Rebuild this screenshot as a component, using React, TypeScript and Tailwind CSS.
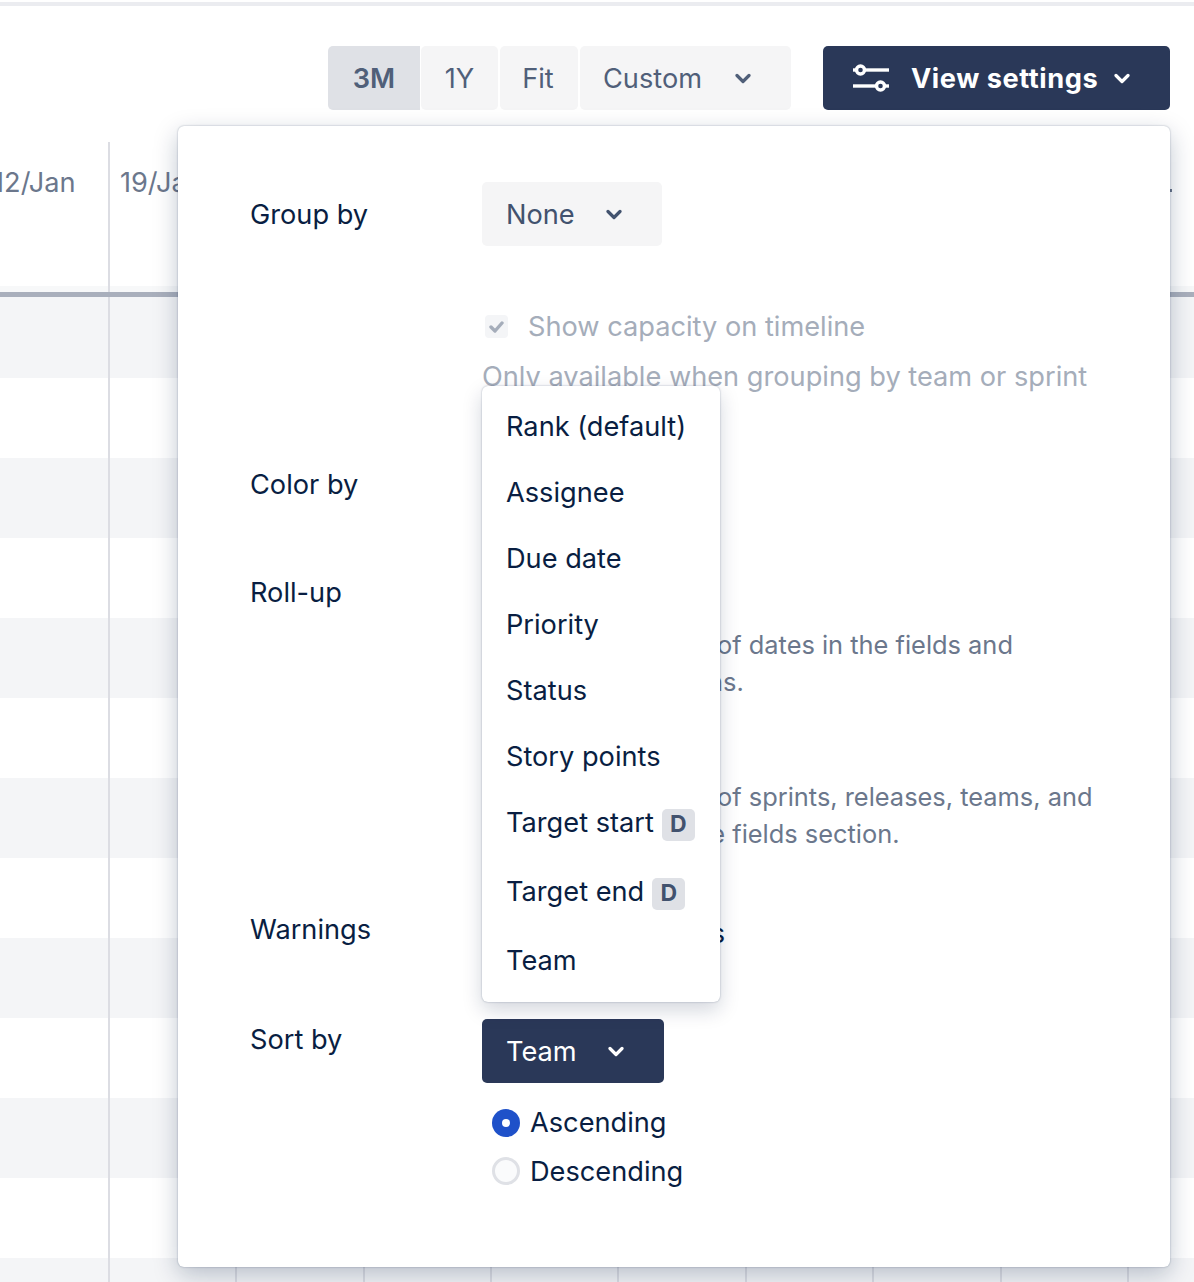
import type { ReactNode } from 'react'

const dates = ['12/Jan', '19/Jan', '26/Jan', '2/Feb', '9/Feb', '16/Feb', '23/Feb', '2/Mar', '', '']
const sortOptions = ['Rank (default)', 'Assignee', 'Due date', 'Priority', 'Status', 'Story points']

function Chevron({ className }: { className?: string }) {
  return (
    <svg width="16" height="11" viewBox="0 0 16 11" fill="none" className={className}>
      <path d="M2 2.5 8 8.5 14 2.5" stroke="currentColor" strokeWidth="3.2" strokeLinecap="round" strokeLinejoin="round" />
    </svg>
  )
}

function SlidersIcon() {
  return (
    <svg width="38" height="28" viewBox="0 0 38 28" fill="none" stroke="white" strokeWidth="3.4">
      <path d="M13 6H37" />
      <circle cx="8.5" cy="6" r="4" />
      <path d="M1 6H4" />
      <path d="M1 22H24" />
      <circle cx="28.5" cy="22" r="4" />
      <path d="M33 22H37" />
    </svg>
  )
}

function Row({ label, labelClass, className, children }: { label: string; labelClass?: string; className?: string; children?: ReactNode }) {
  return (
    <div className={`flex items-start ${className ?? ''}`}>
      <div className={`w-[232px] shrink-0 h-[37px] leading-[37px] ${labelClass ?? ''}`}>{label}</div>
      <div className="min-w-0 flex-1">{children}</div>
    </div>
  )
}

function TargetItem({ label }: { label: string }) {
  return (
    <div className="h-[69px] flex items-center pl-[24px] gap-[8px]">
      <span>{label}</span>
      <span className="mt-[2px] w-[33px] h-[32px] rounded-[5px] bg-[#dfe1e6] text-[#42526e] text-[23px] font-bold flex items-center justify-center">D</span>
    </div>
  )
}

export default function App() {
  return (
    <div className="relative h-[1282px] w-[1194px] overflow-hidden bg-white font-['Inter',sans-serif] text-[27.2px] text-[#091e42]">
      <div className="mt-[2px] h-[4px] bg-[#ebecf0]" />

      <div className="flex justify-end pr-[24px] pt-[40px]">
        <div className="flex gap-[2px] text-[#505f79]">
          <button className="h-[64px] w-[92px] -mr-px pt-[2px] rounded-l-[5px] bg-[#dfe1e6] font-semibold">3M</button>
          <button className="h-[64px] w-[77px] pt-[2px] rounded-[5px] bg-[#f5f5f6]">1Y</button>
          <button className="h-[64px] w-[78px] pt-[2px] pr-[2px] rounded-[5px] bg-[#f5f5f6]">Fit</button>
          <button className="h-[64px] w-[211px] rounded-[5px] bg-[#f5f5f6] flex items-center pl-[23px]">
            <span className="pt-[2px]">Custom</span>
            <Chevron className="ml-[33px]" />
          </button>
        </div>
        <button className="ml-[32px] h-[64px] w-[347px] rounded-[5px] bg-[#2a3858] text-white font-bold tracking-[0.55px] flex items-center pl-[29px]">
          <SlidersIcon />
          <span className="ml-[21px] pt-[2px]">View settings</span>
          <Chevron className="ml-[16px]" />
        </button>
      </div>

      {/* timeline */}
      <div className="relative mt-[32px]">
        <div className="flex h-[144px] ml-[-17.5px] text-[#6b778c]">
          {dates.map((d, i) => (
            <div key={i} className="w-[127.4px] shrink-0 pl-[10px] pt-[22px] leading-[37px]">
              {i === 0 ? <span className="pl-[0.5px]">{d}</span> : d}
            </div>
          ))}
        </div>
        <div className="h-[6px] bg-[#f7f8f9]" />
        <div className="relative z-10 h-[5px] bg-[#a9afbc]" />
        <div className="flex flex-col">
          {[0, 1, 2, 3, 4, 5, 6].map((i) => (
            <div key={i}>
              <div className={`bg-[#f4f5f7] ${i === 0 ? 'h-[81px]' : 'h-[80px]'}`} />
              <div className="h-[80px]" />
            </div>
          ))}
        </div>
        {/* week grid lines */}
        <div className="absolute inset-y-0 left-[-17.5px] flex">
          {dates.map((_, i) => (
            <div key={i} className="w-[127.4px] shrink-0 border-r-2 border-[#dcdde3]" />
          ))}
        </div>
      </div>

      <div className="absolute left-[1170px] top-[189px] h-[3px] w-[2px] bg-[#6b778c]" />

      {/* view settings popover */}
      <div className="absolute z-20 left-[178px] top-[126px] h-[1141px] w-[992px] rounded-[6px] bg-white pl-[72px] pt-[56px] shadow-[0_8px_24px_rgba(9,30,66,0.25),0_0_2px_rgba(9,30,66,0.35)]">
        <div className="flex items-center h-[64px]">
          <div className="w-[232px] shrink-0 pt-[2px]">Group by</div>
          <button className="h-[64px] w-[180px] rounded-[5px] bg-[#f5f5f6] text-[#42526e] flex items-center pl-[24px]">
            <span className="pt-[2px]">None</span>
            <Chevron className="ml-[31px]" />
          </button>
        </div>

        <div className="ml-[232px] mt-[62px] flex items-center h-[37px] text-[#a5adba]">
          <span className="ml-[3px] w-[23px] h-[23px] rounded-[4px] bg-[#f4f5f7] flex items-center justify-center">
            <svg width="15" height="12" viewBox="0 0 15 12" fill="none">
              <path d="M2 6 6 10 13 2" stroke="#a5adba" strokeWidth="3.4" strokeLinecap="round" strokeLinejoin="round" />
            </svg>
          </span>
          <span className="ml-[20px] pt-[2px]">Show capacity on timeline</span>
        </div>
        <div className="ml-[232px] mt-[13px] h-[37px] leading-[37px] text-[#a5adba]">Only available when grouping by team or sprint</div>

        <Row label="Color by" className="mt-[71px]" />

        <Row label="Roll-up" className="mt-[71px]">
          <div className="pl-[235px] pt-[52px] pb-[1px] text-[25.4px] leading-[37px] text-[#6b778c]">
            <div>of dates in the fields and</div>
            <div className="ml-[-9px]">ns.</div>
            <div className="mt-[78px]">of sprints, releases, teams, and</div>
            <div className="ml-[-30px]">the fields section.</div>
          </div>
        </Row>

        <Row label="Warnings" className="mt-[58px]">
          <div className="w-[243px] text-right mt-[4px] h-[37px] leading-[37px]">warnings</div>
        </Row>

        <Row label="Sort by" labelClass="mt-[2px]" className="mt-[67px]">
          <button className="h-[64px] w-[182px] rounded-[5px] bg-[#2a3858] text-white flex items-center pl-[24px]">
            <span className="pt-[2px]">Team</span>
            <Chevron className="ml-[31px]" />
          </button>
          <div className="mt-[16px] ml-[10px]">
            <div className="flex items-center h-[48px]">
              <span className="w-[28px] h-[28px] rounded-full bg-[#1f51c9] flex items-center justify-center">
                <span className="w-[8px] h-[8px] rounded-full bg-white" />
              </span>
              <span className="ml-[10px]">Ascending</span>
            </div>
            <div className="flex items-center h-[48px]">
              <span className="w-[28px] h-[28px] rounded-full border-[3px] border-[#dfe1e6] bg-[#fafbfc]" />
              <span className="ml-[10px] pt-[2px]">Descending</span>
            </div>
          </div>
        </Row>
      </div>

      {/* sort by menu */}
      <div className="absolute z-30 left-[482px] top-[386px] w-[238px] h-[616px] rounded-[6px] bg-white pt-[7px] shadow-[0_8px_20px_rgba(9,30,66,0.18),0_0_2px_rgba(9,30,66,0.35)]">
        {sortOptions.map((o) => (
          <div key={o} className="h-[66px] flex items-center pl-[24px] pt-[2px]">{o}</div>
        ))}
        <TargetItem label="Target start" />
        <TargetItem label="Target end" />
        <div className="h-[66px] flex items-center pl-[24px] pt-[2px]">Team</div>
      </div>
    </div>
  )
}
